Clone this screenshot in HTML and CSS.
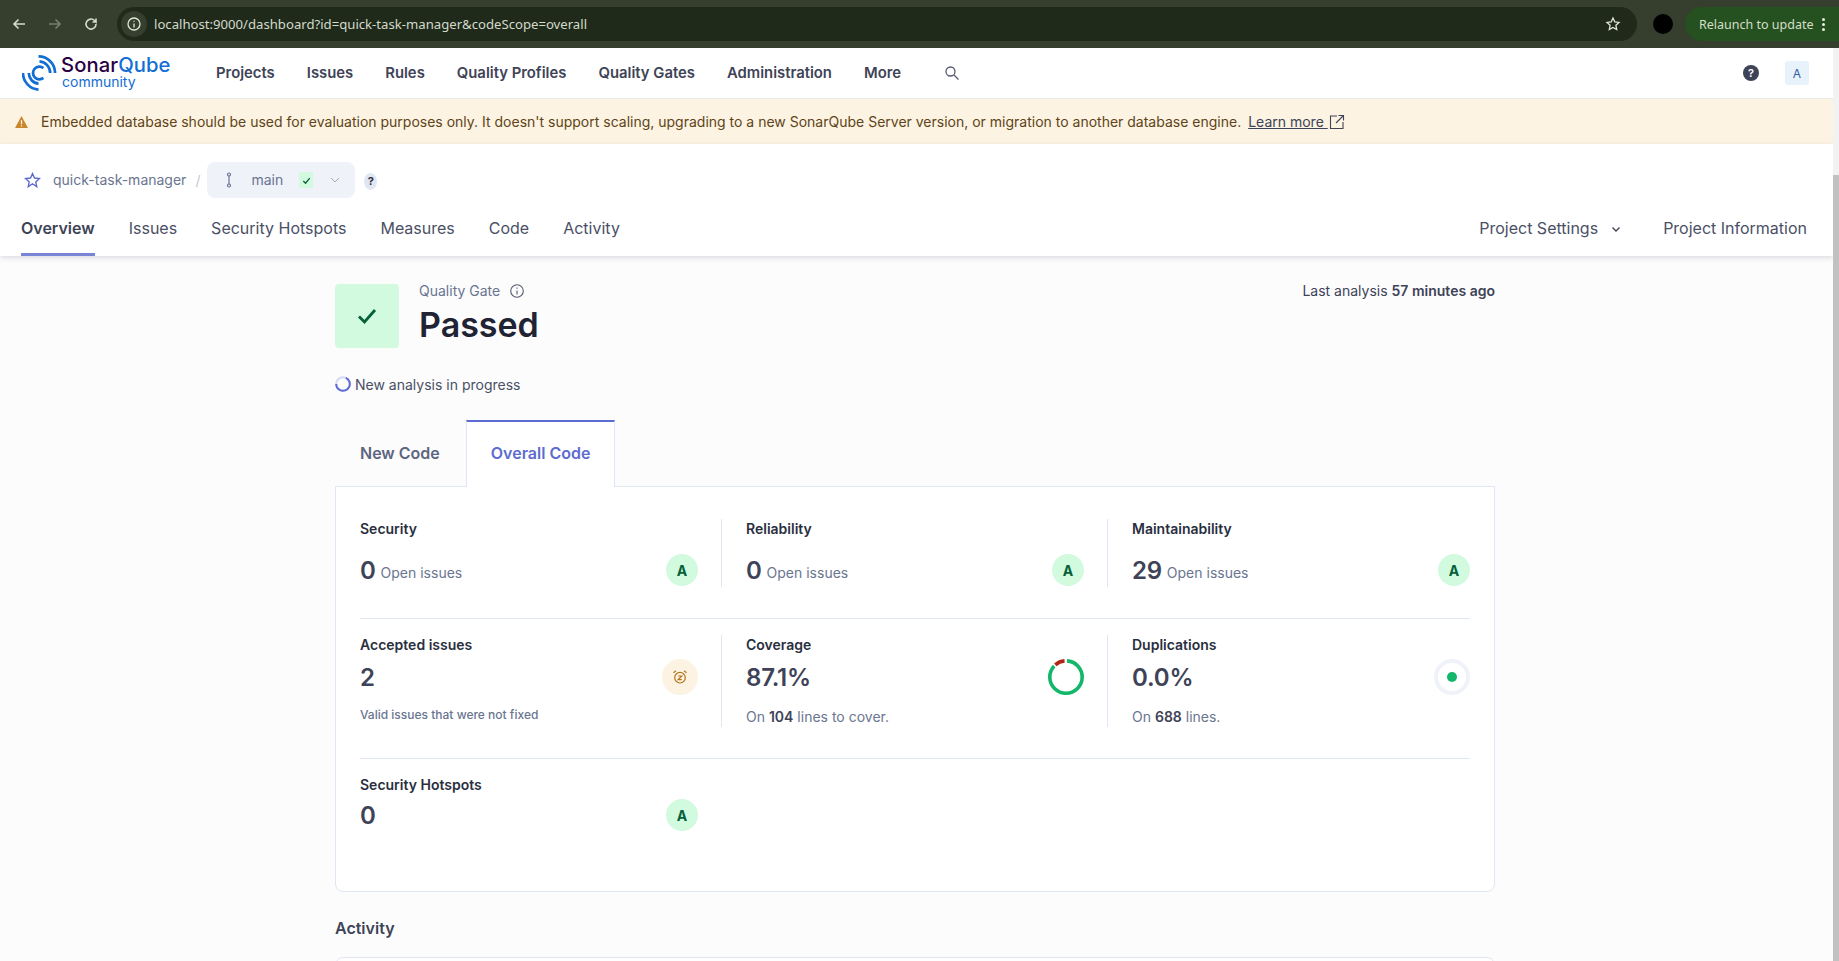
FILE: index.html
```html
<!DOCTYPE html>
<html lang="en">
<head>
  <meta charset="UTF-8" />
  <title>quick-task-manager - SonarQube</title>
  <link rel="stylesheet" href="styles.css">
</head>
<body>
  <!-- Browser toolbar -->
  <div class="browser">
    <svg class="b-icon" viewBox="0 0 16 16"><path d="M14 8H3M7.5 3.5 3 8l4.500 4.500"/></svg>
    <svg class="b-icon dim" viewBox="0 0 16 16"><path d="M2 8h11M8.500 3.500 13 8l-4.500 4.500"/></svg>
    <svg class="b-icon" viewBox="0 0 16 16"><path d="M13 8a5 5 0 1 1-1.500-3.500L13 6V2.500M13 6H9.500"/></svg>
    <div class="urlbar">
      <span class="url-info">
        <svg viewBox="0 0 16 16"><circle cx="8" cy="8" r="6"/><path d="M8 7.500V11.500M8 4.800V5.800"/></svg>
      </span>
      <span class="url-text">localhost:9000/dashboard?id=quick-task-manager&amp;codeScope=overall</span>
      <svg class="url-star" viewBox="0 0 16 16"><path d="M8 2l1.800 3.900 4.200.5-3.100 2.900.8 4.200L8 11.400l-3.700 2.100.8-4.200L2 6.400l4.200-.5z"/></svg>
    </div>
    <span class="avatar"></span>
    <div class="relaunch">
      <span>Relaunch to update</span>
      <span class="dots"><i></i><i></i><i></i></span>
    </div>
  </div>

  <div class="viewport">
    <div class="page">
      <!-- Global nav -->
      <nav class="topnav">
        <a class="logo">
          <svg viewBox="0 0 36 36"><path d="M17 1A17 17 0 0 1 34 18M18 6A12 12 0 0 1 29 18M1 18A17 17 0 0 0 17 35M7 18A11 11 0 0 0 17 29M22 13A6.500 6.500 0 1 0 22 23"/></svg>
          <span class="logo-text">
            <span class="logo-name"><b>Sonar</b>Qube</span>
            <span class="logo-sub">community</span>
          </span>
        </a>
        <div class="nav-links">
          <a>Projects</a><a>Issues</a><a>Rules</a><a>Quality Profiles</a><a>Quality Gates</a><a>Administration</a><a>More</a>
        </div>
        <svg class="nav-search" viewBox="0 0 16 16"><circle cx="6.500" cy="6.500" r="4.500"/><path d="M10 10l4.500 4.500"/></svg>
        <span class="nav-help">?</span>
        <span class="nav-user">A</span>
      </nav>

      <!-- Warning banner -->
      <div class="banner">
        <svg class="warn" viewBox="0 0 14 13"><path d="M7 0 14 13H0z"/><path class="warn-mark" d="M7 4.500v4.500M7 10v1.300"/></svg>
        <span>Embedded database should be used for evaluation purposes only. It doesn't support scaling, upgrading to a new SonarQube Server version, or migration to another database engine.</span>
        <a class="learn">Learn more </a>
        <svg class="ext" viewBox="0 0 16 16"><path d="M8 2H1.500v12.500H14V8M9.500 1.500h5v5M14.500 1.500 7 9"/></svg>
      </div>

      <!-- Project header -->
      <header class="project">
        <div class="crumbs">
          <svg class="star" viewBox="0 0 16 16"><path d="M8 1.500l1.900 4.200 4.600.5-3.400 3.100.9 4.500L8 11.100l-4 2.700.9-4.500L1.500 6.200l4.600-.5z"/></svg>
          <span class="proj-name">quick-task-manager</span>
          <span class="slash">/</span>
          <div class="branch">
            <svg class="branch-icon" viewBox="0 0 10 16"><circle cx="5" cy="2.500" r="1.500"/><circle cx="5" cy="13.500" r="1.500"/><path d="M5 4v8"/></svg>
            <span class="branch-name">main</span>
            <span class="branch-ok"><svg viewBox="0 0 12 12"><path d="M2.500 6.500 5 9l4.500-5.500"/></svg></span>
            <svg class="branch-chev" viewBox="0 0 12 12"><path d="M2 4l4 4 4-4"/></svg>
          </div>
          <span class="crumb-help">?</span>
        </div>
        <div class="tabs">
          <a class="active">Overview</a><a>Issues</a><a>Security Hotspots</a><a>Measures</a><a>Code</a><a>Activity</a>
          <a class="tab-settings">Project Settings <svg viewBox="0 0 12 12"><path d="M2.500 4.500 6 8l3.500-3.500"/></svg></a>
          <a class="tab-info">Project Information</a>
        </div>
      </header>

      <main class="content">
        <div class="gate">
          <div class="gate-box"><svg viewBox="0 0 20 20"><path d="M2 10.500 7.500 16 18 4"/></svg></div>
          <div class="gate-text">
            <div class="gate-label">Quality Gate
              <svg viewBox="0 0 16 16"><circle cx="8" cy="8" r="6.300"/><path d="M8 7.500V11.500M8 4.500V5.800"/></svg>
            </div>
            <div class="gate-status">Passed</div>
          </div>
          <div class="last-analysis">Last analysis <b>57 minutes ago</b></div>
        </div>

        <div class="progress">
          <svg viewBox="0 0 16 16">
            <circle class="spin-bg" cx="8" cy="8" r="6.800"/>
            <circle cx="8" cy="8" r="6.800" pathLength="100" stroke-dasharray="68 32" transform="rotate(-65 8 8)"/>
          </svg>
          New analysis in progress
        </div>

        <div class="code-tabs">
          <a>New Code</a>
          <a class="active">Overall Code</a>
        </div>

        <section class="card">
          <div class="row row-one">
            <div class="metric">
              <div class="metric-title">Security</div>
              <div class="metric-body issues">
                <div><span class="value">0</span> <span class="unit">Open issues</span></div>
                <span class="grade">A</span>
              </div>
            </div>
            <div class="metric">
              <div class="metric-title">Reliability</div>
              <div class="metric-body issues">
                <div><span class="value">0</span> <span class="unit">Open issues</span></div>
                <span class="grade">A</span>
              </div>
            </div>
            <div class="metric">
              <div class="metric-title">Maintainability</div>
              <div class="metric-body issues">
                <div><span class="value">29</span> <span class="unit">Open issues</span></div>
                <span class="grade">A</span>
              </div>
            </div>
          </div>

          <div class="row row-two">
            <div class="metric">
              <div class="metric-title">Accepted issues</div>
              <div class="metric-body">
                <span class="value">2</span>
                <span class="accepted">
                  <svg viewBox="0 0 16 16"><circle cx="8" cy="8.700" r="5.300"/><path d="M1.500 3.800 4 1.800M14.500 3.800 12 1.800M6.200 7h3.600l-3.600 3.600h3.600"/></svg>
                </span>
              </div>
              <div class="metric-note small">Valid issues that were not fixed</div>
            </div>
            <div class="metric">
              <div class="metric-title">Coverage</div>
              <div class="metric-body">
                <span class="value">87.1%</span>
                <svg class="donut" viewBox="0 0 36 36">
                  <g transform="rotate(-90 18 18)">
                    <circle class="donut-ok" cx="18" cy="18" r="16.200" pathLength="100" stroke-dasharray="86 14" stroke-dashoffset="-1"/>
                    <circle class="donut-bad" cx="18" cy="18" r="16.200" pathLength="100" stroke-dasharray="10 90" stroke-dashoffset="-88.500"/>
                  </g>
                </svg>
              </div>
              <div class="metric-note">On <b>104</b> lines to cover.</div>
            </div>
            <div class="metric">
              <div class="metric-title">Duplications</div>
              <div class="metric-body">
                <span class="value">0.0%</span>
                <span class="dup"><i></i></span>
              </div>
              <div class="metric-note">On <b>688</b> lines.</div>
            </div>
          </div>

          <div class="row row-three">
            <div class="metric">
              <div class="metric-title">Security Hotspots</div>
              <div class="metric-body">
                <span class="value">0</span>
                <span class="grade">A</span>
              </div>
            </div>
          </div>
        </section>

        <h2 class="activity-title">Activity</h2>
        <section class="activity-card"></section>
      </main>
    </div>

    <!-- Scrollbar -->
    <div class="scrollbar"><span class="thumb"></span></div>
  </div>
</body>
</html>
```

FILE: styles.css
```css
* {
  box-sizing: border-box;
}

html, body {
  margin: 0;
  height: 100%;
  overflow: hidden;
}

body {
  font-family: Inter, "Noto Sans", sans-serif;
  font-size: 14px;
  color: #3e4357;
  background: #fcfcfd;
  display: flex;
  flex-direction: column;
}

svg {
  display: block;
  fill: none;
}

/* Browser toolbar */
.browser {
  flex: none;
  height: 48px;
  background: #363e2e;
  display: flex;
  align-items: center;
  padding: 0 0 0 11px;
  font-family: "Noto Sans", sans-serif;
}

.b-icon {
  width: 16px;
  height: 16px;
  margin-right: 20px;
  stroke: #d5dccb;
  stroke-width: 1.600;
}

.b-icon.dim {
  stroke: #78806e;
}

.urlbar {
  width: 1520px;
  height: 34px;
  margin-left: -2px;
  background: #1f2a1a;
  border-radius: 17px;
  display: flex;
  align-items: center;
  color: #d3d9cb;
  font-size: 13.150px;
}

.url-info {
  width: 26px;
  height: 26px;
  margin-left: 4px;
  border-radius: 50%;
  background: #363e2e;
  display: flex;
  align-items: center;
  justify-content: center;
}

.url-info svg {
  width: 16px;
  height: 16px;
  stroke: #e2e7da;
  stroke-width: 1.300;
}

.url-text {
  margin-left: 7px;
  flex: 1;
}

.url-star {
  width: 16px;
  height: 16px;
  margin-right: 16px;
  stroke: #e2e7da;
  stroke-width: 1.300;
}

.avatar {
  width: 20px;
  height: 20px;
  margin-left: 16px;
  border-radius: 50%;
  background: #000;
}

.relaunch {
  width: 154px;
  height: 34px;
  margin-left: 12px;
  padding-left: 14px;
  background: #25501f;
  border-radius: 17px 0 0 17px;
  display: flex;
  align-items: center;
  color: #d3dfc9;
  font-size: 12.500px;
}

.dots {
  margin-left: 8px;
  display: flex;
  flex-direction: column;
  gap: 2px;
}

.dots i {
  width: 3px;
  height: 3px;
  border-radius: 50%;
  background: #e8eee0;
}

/* Page + scrollbar */
.viewport {
  flex: 1;
  min-height: 0;
  display: flex;
}

.page {
  flex: 1;
  min-width: 0;
  overflow: hidden;
}

.scrollbar {
  flex: none;
  width: 6px;
  background: #f2f2f2;
  padding-top: 127px;
  display: flex;
}

.thumb {
  flex: 1;
  background: #c1c1c1;
}

/* Global nav */
.topnav {
  height: 51px;
  background: #fff;
  border-bottom: 1px solid #ebebeb;
  display: flex;
  align-items: center;
  padding: 0 24px 0 21px;
}

.logo {
  width: 195px;
  display: flex;
  align-items: center;
  gap: 4px;
}

.logo svg {
  width: 35px;
  height: 36px;
  margin-left: 1px;
  stroke: #126ed3;
  stroke-width: 2.800;
}

.logo-text {
  display: flex;
  flex-direction: column;
  margin-top: -1px;
}

.logo-name {
  font-size: 20.200px;
  font-weight: 500;
  line-height: 18px;
  letter-spacing: 0.100px;
  color: #126ed3;
}

.logo-name b {
  font-weight: 500;
  color: #290042;
}

.logo-sub {
  font-size: 14px;
  line-height: 15px;
  margin-left: 1px;
  color: #126ed3;
}

.nav-links {
  display: flex;
  gap: 32px;
  margin-top: -1px;
  font-size: 14.850px;
  font-weight: 600;
  color: #3e4357;
}

.nav-search {
  width: 16px;
  height: 16px;
  margin-left: 43px;
  stroke: #555b70;
  stroke-width: 1.300;
}

.nav-help {
  margin-left: auto;
  width: 16px;
  height: 16px;
  border-radius: 50%;
  background: #3e4357;
  color: #fff;
  font-size: 11px;
  font-weight: 600;
  display: flex;
  align-items: center;
  justify-content: center;
}

.nav-user {
  margin-left: 26px;
  width: 24px;
  height: 24px;
  border-radius: 3px;
  background: #e8f2fb;
  color: #2f5f9e;
  font-size: 12px;
  display: flex;
  align-items: center;
  justify-content: center;
}

/* Banner */
.banner {
  height: 45px;
  background: #fcf3e2;
  display: flex;
  align-items: center;
  padding-left: 15px;
  color: #5f4418;
}

.warn {
  width: 13px;
  height: 12px;
  margin-right: 13px;
}

.warn path {
  fill: #c9862b;
}

.warn .warn-mark {
  fill: none;
  stroke: #fcf3e2;
  stroke-width: 1.400;
}

.learn {
  margin-left: 7px;
  color: #3e4357;
  text-decoration: underline;
  white-space: pre;
}

.ext {
  width: 16px;
  height: 16px;
  margin-left: 1px;
  stroke: #3e4357;
  stroke-width: 1.100;
}

/* Project header */
.project {
  height: 112px;
  background: #fff;
  box-shadow: 0 2px 5px rgba(30, 35, 60, 0.14);
  padding: 18px 26px 0 21px;
  position: relative;
}

.crumbs {
  height: 36px;
  display: flex;
  align-items: center;
  color: #6a7590;
}

.star {
  width: 17px;
  height: 17px;
  margin-left: 3px;
  stroke: #5d6cd0;
  stroke-width: 1.300;
}

.proj-name {
  margin: 0 0 1px 12px;
}

.branch-name {
  margin-bottom: 1px;
}

.slash {
  margin: 0 7px 0 9px;
  color: #c3c7d0;
}

.branch {
  width: 148px;
  height: 36px;
  border-radius: 8px;
  background: #eff2f9;
  display: flex;
  align-items: center;
  padding-left: 17px;
}

.branch-icon {
  width: 10px;
  height: 16px;
  margin-right: 17px;
  stroke: #6a7590;
  stroke-width: 1.200;
}

.branch-ok {
  width: 14px;
  height: 16px;
  margin-left: 16px;
  background: #d1fadf;
  display: flex;
  align-items: center;
  justify-content: center;
}

.branch-ok svg {
  width: 11px;
  height: 11px;
  stroke: #05603a;
  stroke-width: 1.400;
}

.branch-chev {
  width: 12px;
  height: 12px;
  margin-left: 16px;
  stroke: #a3abbd;
  stroke-width: 1;
}

.crumb-help {
  width: 13px;
  height: 17px;
  margin: 2px 0 0 9px;
  border-radius: 50%;
  background: #e1e6f3;
  color: #2a2f40;
  font-size: 11px;
  font-weight: 700;
  display: flex;
  align-items: center;
  justify-content: center;
}

.tabs {
  height: 58px;
  display: flex;
  gap: 34px;
  font-size: 16px;
  color: #4a5065;
}

.tabs a {
  padding-top: 20px;
  height: 58px;
  display: flex;
  gap: 12px;
}

.tabs a.active {
  font-weight: 600;
  color: #3e4357;
  border-bottom: 3px solid #7a84d6;
}

.tabs .tab-settings {
  margin-left: auto;
}

.tab-settings svg {
  width: 12px;
  height: 12px;
  margin-top: 5px;
  stroke: #3e4357;
  stroke-width: 1.400;
}

.tabs .tab-info {
  margin-left: 7px;
}

/* Main content */
.content {
  width: 1160px;
  margin-left: 335px;
}

.gate {
  padding-top: 28px;
  display: flex;
}

.gate-box {
  width: 64px;
  height: 64px;
  border-radius: 4px;
  background: #d1fadf;
  display: flex;
  align-items: center;
  justify-content: center;
}

.gate-box svg {
  width: 20px;
  height: 20px;
  stroke: #05603a;
  stroke-width: 2.800;
}

.gate-text {
  margin-left: 20px;
}

.gate-label {
  display: flex;
  align-items: center;
  gap: 9px;
  height: 13px;
  color: #6a7590;
}

.gate-label svg {
  width: 16px;
  height: 16px;
  stroke: #555b70;
  stroke-width: 1.100;
}

.gate-status {
  margin-top: 6px;
  font-size: 34px;
  line-height: 44px;
  font-weight: 600;
  color: #1f2333;
}

.last-analysis {
  margin-left: auto;
  line-height: 14px;
}

.last-analysis b {
  font-weight: 600;
}

.progress {
  margin-top: 27px;
  height: 18px;
  display: flex;
  align-items: center;
  gap: 4px;
  color: #4a5065;
}

.progress svg {
  width: 16px;
  height: 16px;
  stroke: #5d6cd0;
  stroke-width: 2;
}

.progress .spin-bg {
  stroke: #d5d9f1;
}

.code-tabs {
  margin-top: 27px;
  margin-bottom: -1px;
  height: 67px;
  display: flex;
  position: relative;
  z-index: 1;
  font-size: 16px;
  font-weight: 600;
}

.code-tabs a {
  padding: 23px 25px 0;
  color: #5c6680;
}

.code-tabs a.active {
  padding: 21px 24px 0;
  margin-left: 1px;
  color: #5d6cd0;
  background: #fff;
  border: 1px solid #e1e6f3;
  border-top: 2px solid #5d6cd0;
  border-bottom: none;
}

.card {
  height: 406px;
  background: #fff;
  border: 1px solid #e1e6f3;
  border-radius: 0 0 8px 8px;
  padding: 32px 24px 0;
}

.row {
  display: grid;
  grid-template-columns: 361px 386px 1fr;
}

.row-one {
  height: 100px;
  border-bottom: 1px solid #e1e6f3;
}

.row-two {
  height: 140px;
  padding-top: 16px;
  border-bottom: 1px solid #e1e6f3;
}

.row-three {
  padding-top: 16px;
}

.metric {
  padding-right: 23px;
  height: 68px;
}

.row-two .metric {
  height: 92px;
}

.metric + .metric {
  border-left: 1px solid #e1e6f3;
  padding-left: 24px;
}

.metric:nth-child(3) {
  padding-right: 0;
}

.metric-title {
  font-weight: 600;
  line-height: 20px;
  color: #2a2f40;
}

.metric-body {
  margin-top: 4px;
  height: 36px;
  display: flex;
  align-items: center;
  justify-content: space-between;
}

.row-three .metric-body {
  margin-top: 2px;
}

.metric-body.issues {
  margin-top: 15px;
  height: 32px;
}

.value {
  font-size: 24px;
  font-weight: 600;
  letter-spacing: -0.200px;
  color: #3e4357;
}

.unit {
  color: #6a7590;
  margin-left: 1px;
  vertical-align: 1px;
}

.grade {
  width: 32px;
  height: 32px;
  border-radius: 50%;
  background: #d1fadf;
  color: #05603a;
  font-weight: 700;
  display: flex;
  align-items: center;
  justify-content: center;
}

.accepted {
  width: 36px;
  height: 36px;
  border-radius: 50%;
  background: #fcf3e2;
  display: flex;
  align-items: center;
  justify-content: center;
}

.accepted svg {
  width: 16px;
  height: 16px;
  stroke: #b5761e;
  stroke-width: 1.200;
}

.donut {
  width: 36px;
  height: 36px;
  stroke-width: 3.600;
}

.donut-ok {
  stroke: #12b76a;
}

.donut-bad {
  stroke: #b42318;
}

.dup {
  width: 36px;
  height: 36px;
  border-radius: 50%;
  border: 4px solid #eff2f9;
  display: flex;
  align-items: center;
  justify-content: center;
}

.dup i {
  width: 10px;
  height: 10px;
  border-radius: 50%;
  background: #12b76a;
}

.metric-note {
  margin-top: 13px;
  color: #6a7590;
}

.metric-note b {
  font-weight: 600;
  color: #3e4357;
}

.metric-note.small {
  margin-top: 12px;
  font-size: 12px;
  font-weight: 500;
}

.activity-title {
  margin: 27px 0 0;
  font-size: 16px;
  line-height: 18px;
  font-weight: 600;
  color: #3e4357;
}

.activity-card {
  margin-top: 20px;
  height: 300px;
  background: #fff;
  border: 1px solid #e1e6f3;
  border-radius: 8px;
}
```
